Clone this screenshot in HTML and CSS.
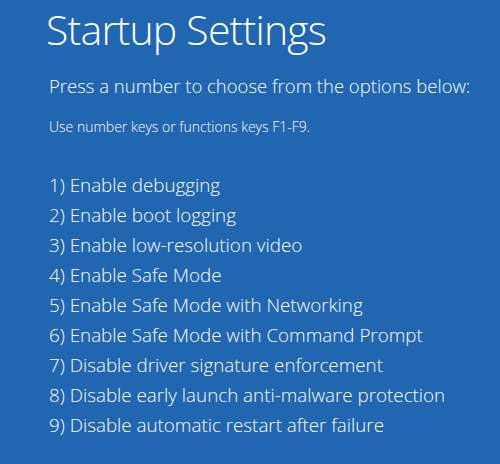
FILE: index.html
```html
<!DOCTYPE html>
<html lang="en">
<head>
  <meta charset="UTF-8">
  <title>Startup Settings</title>
  <link rel="stylesheet" href="styles.css">
</head>
<body>
  <div class="screen">
    <h1>Startup Settings</h1>
    <p class="lead">Press a number to choose from the options below:</p>
    <p class="hint">Use number keys or functions keys F1-F9.</p>
    <ol class="options">
      <li>1) Enable debugging</li>
      <li>2) Enable boot logging</li>
      <li>3) Enable low-resolution video</li>
      <li>4) Enable Safe Mode</li>
      <li>5) Enable Safe Mode with Networking</li>
      <li>6) Enable Safe Mode with Command Prompt</li>
      <li>7) Disable driver signature enforcement</li>
      <li>8) Disable early launch anti-malware protection</li>
      <li>9) Disable automatic restart after failure</li>
    </ol>
  </div>
</body>
</html>
```

FILE: styles.css
```css
html, body {
  margin: 0;
  height: 100%;
}
body {
  background-color: #2066b1;
  color: #fff;
  font-family: "Open Sans", "Noto Sans", sans-serif;
  font-weight: 300;
}
.screen {
  padding: 1px 0 0 46px;
}
h1 {
  margin: 0;
  font-size: 41px;
  font-weight: 300;
  letter-spacing: -0.8px;
  line-height: 56px;
}
.lead {
  margin: 16px 0 0 3px;
  font-size: 18.5px;
  line-height: 26px;
}
.hint {
  margin: 18px 0 0 3px;
  font-size: 14px;
  line-height: 20px;
}
.options {
  list-style: none;
  margin: 33px 0 0 3px;
  padding: 0;
  font-size: 18.8px;
}
.options li {
  line-height: 30px;
}
```
